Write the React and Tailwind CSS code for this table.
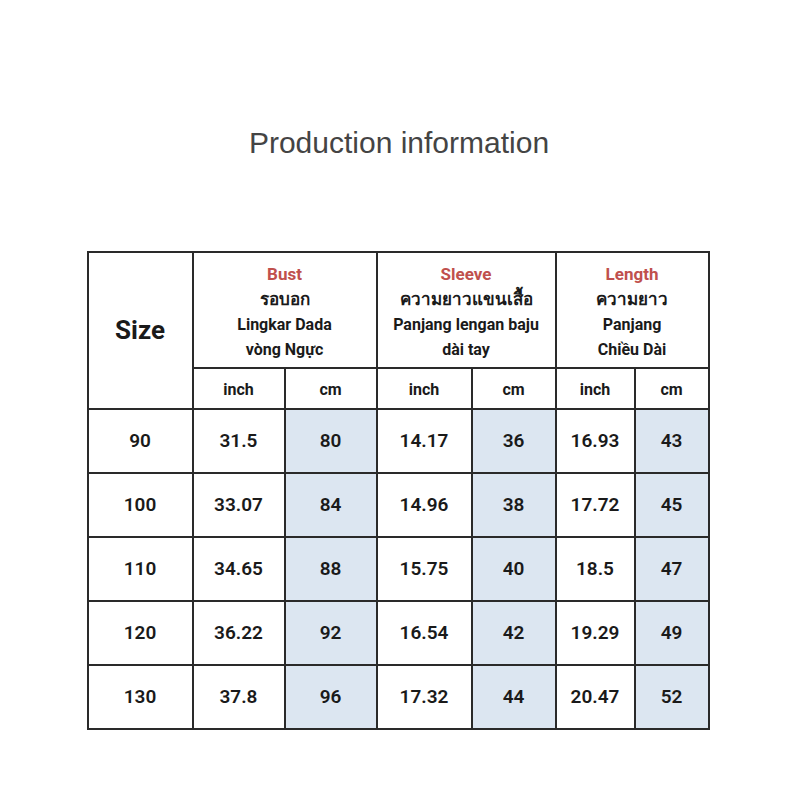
import React from "react";

const rows = [
  ["90", "31.5", "80", "14.17", "36", "16.93", "43"],
  ["100", "33.07", "84", "14.96", "38", "17.72", "45"],
  ["110", "34.65", "88", "15.75", "40", "18.5", "47"],
  ["120", "36.22", "92", "16.54", "42", "19.29", "49"],
  ["130", "37.8", "96", "17.32", "44", "20.47", "52"],
];

const groups = [
  { en: "Bust", th: "รอบอก", id: "Lingkar Dada", vi: "vòng Ngực" },
  { en: "Sleeve", th: "ความยาวแขนเสื้อ", id: "Panjang lengan baju", vi: "dài tay" },
  { en: "Length", th: "ความยาว", id: "Panjang", vi: "Chiều Dài" },
];

const cell = "border-2 border-[#2a2a2a] text-center p-0";

const App = () => {
  return (
    <div className="w-[800px] h-[800px] bg-white flex flex-col items-center">
      <h1
        className="mt-[123px] text-[30px] leading-[40px] text-[#444] mr-[2px]"
        style={{ fontFamily: '"Liberation Sans", Arial, sans-serif' }}
      >
        Production information
      </h1>
      <table
        className="mt-[88px] mr-[4px] table-fixed border-collapse text-[#1a1a1a] font-semibold"
        style={{ fontFamily: 'Roboto, "Noto Sans", sans-serif' }}
      >
        <colgroup>
          <col className="w-[105px]" />
          <col className="w-[92px]" />
          <col className="w-[92px]" />
          <col className="w-[95px]" />
          <col className="w-[84px]" />
          <col className="w-[79px]" />
          <col className="w-[74px]" />
        </colgroup>
        <thead>
          <tr className="h-[116px]">
            <th rowSpan={2} className={`${cell} text-[26px] font-bold`}>
              Size
            </th>
            {groups.map((g) => (
              <th key={g.en} colSpan={2} className={`${cell} pt-[3px] text-[16px] leading-[25px]`}>
                <div className="text-[17px] text-[#c0504d]">{g.en}</div>
                <div className="text-[17px]">{g.th}</div>
                <div>{g.id}</div>
                <div>{g.vi}</div>
              </th>
            ))}
          </tr>
          <tr className="h-[41px]">
            {groups.map((g) => (
              <React.Fragment key={g.en}>
                <th className={`${cell} pt-[2px] text-[16px]`}>inch</th>
                <th className={`${cell} pt-[2px] text-[16px]`}>cm</th>
              </React.Fragment>
            ))}
          </tr>
        </thead>
        <tbody>
          {rows.map((r) => (
            <tr key={r[0]} className="h-[64px]">
              {r.map((v, i) => (
                <td
                  key={i}
                  className={`${cell} text-[19px] ${i > 0 && i % 2 === 0 ? "bg-[#dce6f1]" : ""}`}
                >
                  {v}
                </td>
              ))}
            </tr>
          ))}
        </tbody>
      </table>
    </div>
  );
};

export default App;
